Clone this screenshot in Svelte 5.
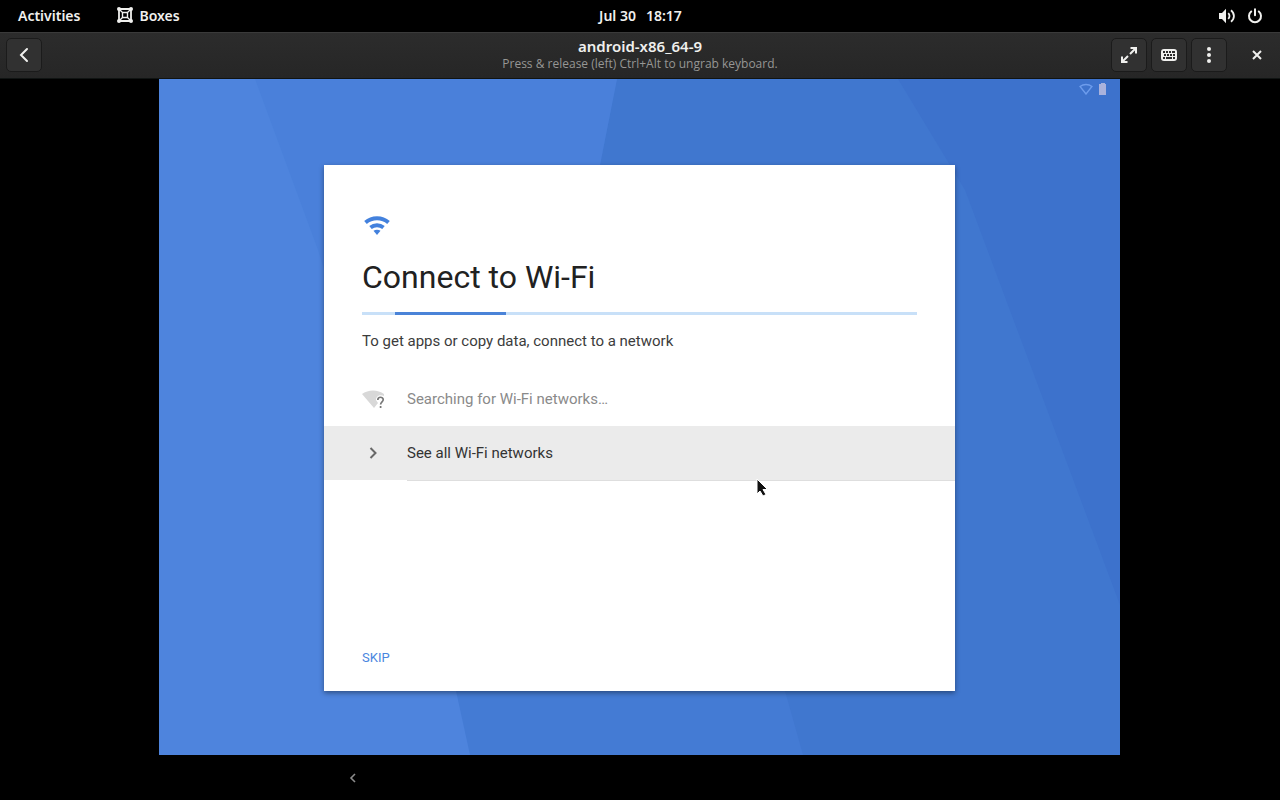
<script lang="ts">
	let progress = { start: 6, length: 20 };

	const title = "android-x86_64-9";
	const hint = "Press & release (left) Ctrl+Alt to ungrab keyboard.";
</script>

<div class="desktop">
	<header class="topbar">
		<nav class="left">
			<button>Activities</button>
			<button class="app">
				<svg width="16" height="16" viewBox="0 0 16 16" fill="none" stroke="currentColor" aria-hidden="true">
					<path stroke-width="1.8" d="M2 2h12v12H2z" />
					<path stroke-width="1.4" d="M5.5 5.5h5v5h-5zM2 2l3.5 3.5M14 2l-3.500 3.500M2 14l3.500-3.500M14 14l-3.500-3.500" />
					<g fill="currentColor" stroke="none">
						<circle cx="2" cy="2" r="2" />
						<circle cx="14" cy="2" r="2" />
						<circle cx="2" cy="14" r="2" />
						<circle cx="14" cy="14" r="2" />
					</g>
				</svg>
				Boxes
			</button>
		</nav>
		<button class="clock"><span>Jul 30</span><span>18:17</span></button>
		<button class="status" aria-label="System menu">
			<svg width="16" height="16" viewBox="0 0 16 16" fill="none" stroke="currentColor" stroke-width="1.8" aria-hidden="true">
				<path fill="currentColor" stroke="none" d="M0 5h3l4-4.300v14.600L3 11H0z" />
				<path d="M9.200 5.200c1.700 1.500 1.700 4.100 0 5.600" />
				<path d="M12 2.200c3.900 3.200 3.900 8.400 0 11.600" />
			</svg>
			<svg width="16" height="16" viewBox="0 0 16 16" fill="none" stroke="currentColor" stroke-width="2" stroke-linecap="round" aria-hidden="true">
				<path d="M8 1.200v6M4.200 3.500a6 6 0 1 0 7.600 0" />
			</svg>
		</button>
	</header>

	<header class="headerbar">
		<div class="side">
			<button class="tool" aria-label="Back">
				<svg width="16" height="16" viewBox="0 0 16 16" fill="none" stroke="currentColor" stroke-width="2" stroke-linecap="round">
					<path d="M11 2L5 8l6 6" />
				</svg>
			</button>
		</div>
		<div class="title">
			<h1>{title}</h1>
			<p>{hint}</p>
		</div>
		<div class="side end">
			<button class="tool" aria-label="Fullscreen">
				<svg width="16" height="16" viewBox="0 0 16 16" fill="none" stroke="currentColor" stroke-width="2">
					<path d="M9 7l6-6M9.500 1H15v5.500M7 9l-6 6M6.500 15H1V9.500" />
				</svg>
			</button>
			<button class="tool" aria-label="Keyboard">
				<svg width="16" height="16" viewBox="0 0 16 16" aria-hidden="true">
					<rect y="2" width="16" height="12" rx="3" fill="currentColor" />
					<path fill="#2c2c2c" d="M2 4h2v2H2zM5 4h2v2H5zM8 4h2v2H8zM11 4h3v2h-3zM3 7h2v2H3zM6 7h2v2H6zM9 7h2v2H9zM12 7h2v2h-2zM2 10h2v2H2zM5 10h6v2H5zM12 10h2v2h-2z" />
				</svg>
			</button>
			<button class="tool" aria-label="Menu">
				<svg width="16" height="16" viewBox="0 0 16 16" fill="currentColor">
					<circle cx="8" cy="2" r="2" />
					<circle cx="8" cy="8" r="2" />
					<circle cx="8" cy="14" r="2" />
				</svg>
			</button>
			<button class="tool close" aria-label="Close">
				<svg width="16" height="16" viewBox="0 0 16 16" fill="none" stroke="currentColor" stroke-width="2">
					<path d="M4 4l8 8M12 4l-8 8" />
				</svg>
			</button>
		</div>
	</header>

	<main class="viewport">
		<div class="screen">
			<svg class="wallpaper" viewBox="0 0 961 676" preserveAspectRatio="none" aria-hidden="true">
				<path fill="#4077cf" d="M0 0h961v676H0z" />
				<path fill="#447bd4" d="M0 0h458l-17 86 185 526 18 64H0z" />
				<path fill="#4a80da" d="M0 0h458l-17 86-80 400H0z" />
				<path fill="#4e84dd" d="M0 0h96l63 171 138 441 14 64H0z" />
				<path fill="#3d72cc" d="M739 0h222v526L806 111z" />
			</svg>

			<div class="android-status">
				<svg width="14" height="12" viewBox="0 0 14 12" fill="none" stroke="#6d9cec" stroke-width="1.4">
					<path d="M1 3.500c3.500-2.600 8.500-2.600 12 0L7 11z" />
				</svg>
				<svg width="8" height="12" viewBox="0 0 8 12" fill="#a9b2dc">
					<path d="M0 1h2V0h4v1h1v11H0z" />
				</svg>
			</div>

			<section class="card">
				<svg class="wifi" width="30" height="26" viewBox="0 0 30 26" fill="none" stroke="#4381dd" stroke-width="4">
					<path d="M3.500 10.500c6.500-5.600 16.500-5.600 23 0" />
					<path d="M8.500 15.500c3.800-3 9.200-3 13 0" />
					<path fill="#4381dd" stroke="none" d="M11.500 18.800c2-1.500 5-1.500 7 0L15 23z" />
				</svg>
				<h2>Connect to Wi-Fi</h2>
				<div class="progress" role="progressbar" aria-label="Searching">
					<div class="bar" style="margin-left: {progress.start}%; width: {progress.length}%"></div>
				</div>
				<p class="intro">To get apps or copy data, connect to a network</p>

				<div class="row searching">
					<svg width="24" height="24" viewBox="0 0 24 24" aria-hidden="true">
						<path fill="#d8d8d8" d="M0 7c6-4.800 16-4.800 22 0v2c-4-2-8 0-8 4l2 3-4 5z" />
						<path fill="none" stroke="#777" stroke-width="1.700" d="M15.800 13c0-3.700 5.400-3.500 5.400-.3 0 2-2.600 2.300-2.600 4.800M18.600 19v2" />
					</svg>
					<span>Searching for Wi-Fi networks…</span>
				</div>
				<button class="row all">
					<svg width="24" height="24" viewBox="0 0 24 24" fill="none" stroke="#686868" stroke-width="2" aria-hidden="true">
						<path d="M8.500 7l5 5-5 5" />
					</svg>
					<span>See all Wi-Fi networks</span>
				</button>
				<hr />

				<button class="skip">SKIP</button>
			</section>
		</div>
	</main>

	<footer class="navbar">
		<button aria-label="Android back">
			<svg width="12" height="12" viewBox="0 0 12 12" fill="none" stroke="#8c8c8c" stroke-width="1.600">
				<path d="M8 2L4 6l4 4" />
			</svg>
		</button>
	</footer>

	<svg class="cursor" width="14" height="20" viewBox="0 0 14 20" fill="#111" stroke="#fff" stroke-width="1" aria-hidden="true">
		<path d="M1 1v15l3-3 3 5 3-1.500-3-5h4.500z" />
	</svg>
</div>

<style>
	:global(body) {
		margin: 0;
		background: #000;
	}

	.desktop {
		position: relative;
		display: flex;
		flex-direction: column;
		min-height: 100vh;
		color: #f0f0ee;
		font-family: "Noto Sans", "Open Sans", sans-serif;
	}

	h1,
	h2,
	p {
		margin: 0;
	}

	button {
		margin: 0;
		padding: 0;
		border: none;
		background: none;
		color: inherit;
		font: inherit;
	}

	svg {
		display: block;
		flex: none;
	}

	.topbar,
	.headerbar {
		display: grid;
		grid-template-columns: 1fr auto 1fr;
		align-items: center;
	}

	.topbar {
		box-sizing: border-box;
		height: 32px;
		padding: 0 17px 2px 18px;
		font-size: 14px;
		font-weight: 600;
	}

	.left,
	.app,
	.clock,
	.status {
		display: flex;
		align-items: center;
	}

	.left {
		gap: 37px;
	}

	.app {
		gap: 6px;
	}

	.clock {
		gap: 10px;
	}

	.status {
		justify-self: end;
		gap: 12px;
		padding-top: 2px;
	}

	.headerbar {
		box-sizing: border-box;
		height: 47px;
		padding: 0 6px 2px;
		border-top: 1px solid #3a3a3a;
		border-bottom: 1px solid #101413;
		background: linear-gradient(#2c2c2c, #262626);
	}

	.title {
		text-align: center;
	}

	.title h1 {
		font-size: 15px;
		line-height: 18px;
		font-weight: 600;
	}

	.title p {
		color: #969694;
		font-family: "Open Sans", "Noto Sans", sans-serif;
		font-size: 12px;
		line-height: 18px;
	}

	.side {
		display: flex;
		gap: 4px;
	}

	.end {
		justify-content: flex-end;
	}

	.tool {
		box-sizing: border-box;
		display: grid;
		place-items: center;
		width: 36px;
		height: 34px;
		border: 1px solid #1b1b1b;
		border-radius: 5px;
		background: #313131;
	}

	.close {
		margin-left: 8px;
		margin-right: -1px;
		border-color: transparent;
		background: none;
	}

	.viewport {
		flex: 1;
		display: grid;
		grid-template-columns: 159fr 961fr 160fr;
	}

	.screen {
		grid-column: 2;
		position: relative;
		display: flex;
		flex-direction: column;
		padding: 0 165px 64px;
		font-family: Roboto, sans-serif;
	}

	.wallpaper {
		position: absolute;
		inset: 0;
		width: 100%;
		height: 100%;
	}

	.android-status {
		position: relative;
		display: flex;
		justify-content: flex-end;
		gap: 6px;
		height: 82px;
		margin-right: -152px;
		padding-top: 4px;
	}

	.card {
		position: relative;
		flex: 1;
		display: flex;
		flex-direction: column;
		padding: 47px 38px 23px;
		background: #fff;
		box-shadow: 0 2px 5px rgba(0, 0, 0, 0.4);
		color: #212121;
	}

	h2 {
		margin-top: 19px;
		font-size: 32px;
		line-height: 40px;
		font-weight: 400;
	}

	.progress {
		margin-top: 15px;
		background: #c8e0f8;
		height: 3px;
	}

	.bar {
		height: 3px;
		background: #4a83d8;
	}

	.intro {
		margin-top: 14px;
		color: #3c3c3c;
		font-size: 15px;
		line-height: 24px;
	}

	.row {
		box-sizing: border-box;
		display: flex;
		align-items: center;
		gap: 21px;
		height: 54px;
		margin: 0 -38px;
		padding: 0 38px;
		font-size: 15px;
		text-align: left;
	}

	.searching {
		margin-top: 19px;
		color: #8a8a8a;
	}

	.all {
		padding-bottom: 1px;
		background: #ebebeb;
		color: #333;
	}

	hr {
		height: 1px;
		margin: 0 -38px 0 45px;
		border: none;
		background: #dedede;
	}

	.skip {
		margin-top: auto;
		align-self: flex-start;
		color: #4a86e0;
		font-size: 13px;
		line-height: 20px;
	}

	.navbar {
		display: flex;
		align-items: center;
		height: 45px;
		padding-left: 347px;
	}

	.cursor {
		position: absolute;
		left: 756px;
		top: 478px;
	}
</style>
